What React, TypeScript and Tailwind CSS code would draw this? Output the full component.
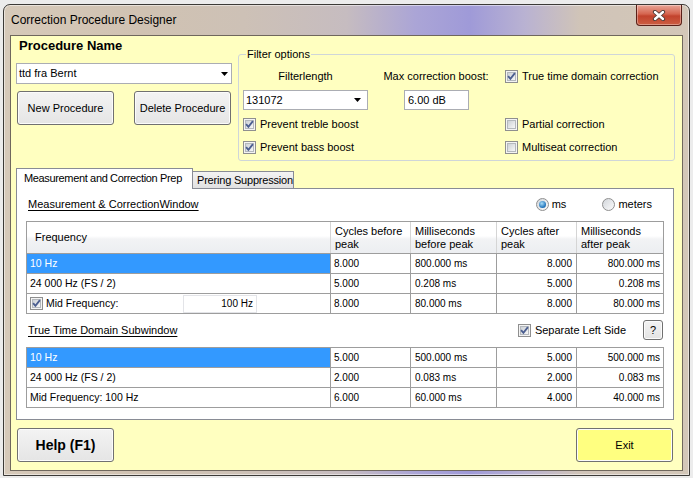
import React from 'react';

const Check = ({ checked }: { checked: boolean }) => (
  <span className="flex h-[13px] w-[13px] shrink-0 items-center justify-center border border-[#8f8f8f] bg-[#f4f4f4]">
    <span className="flex h-[9px] w-[9px] items-center justify-center border border-[#b4b8bd] bg-[linear-gradient(135deg,#cdd1d6,#f7f7f7)]">
      {checked && (
        <svg width="9" height="9" viewBox="0 0 9 9" className="overflow-visible">
          <path d="M1.1 4.2 L3.4 6.9 L7.9 1.1" fill="none" stroke="#4b5e90" strokeWidth="1.8" />
        </svg>
      )}
    </span>
  </span>
);

const Radio = ({ checked }: { checked: boolean }) => (
  <span className="flex h-[13px] w-[13px] shrink-0 items-center justify-center rounded-full border border-[#8f8f8f] bg-[linear-gradient(135deg,#d2d6db,#fbfbfb)]">
    {checked && (
      <span className="h-[7px] w-[7px] rounded-full bg-[radial-gradient(circle_at_40%_35%,#a9ddf8,#2477bd_65%,#0f4c88)]" />
    )}
  </span>
);

const Combo = ({ value, className }: { value: string; className: string }) => (
  <div className={`flex items-center border border-[#abadb3] bg-white ${className}`}>
    <span className="flex-1">{value}</span>
    <svg width="7" height="4" viewBox="0 0 7 4">
      <path d="M0 0h7L3.5 4z" fill="#000" />
    </svg>
  </div>
);

const Btn = ({ children, className }: { children: React.ReactNode; className: string }) => (
  <div
    className={`flex items-center justify-center rounded-[3px] border border-[#707070] shadow-[inset_0_0_0_1px_#fbfbfb] ${className}`}
  >
    {children}
  </div>
);

const cols = 'grid grid-cols-[303px_80px_86px_80px_87px]';

type Row = { first: React.ReactNode; selected?: boolean; vals: string[] };

const GridTable = ({ rows, header }: { rows: Row[]; header: boolean }) => (
  <div className="w-[638px] border border-[#9d9d9d] bg-white">
    {header && (
      <div className={`${cols} h-[32px] border-b border-[#9d9d9d] bg-[linear-gradient(#ffffff,#ffffff_45%,#f2f3f5_55%,#eceef1)]`}>
        <div className="flex items-center pl-[8px]">Frequency</div>
        {['Cycles before peak', 'Milliseconds before peak', 'Cycles after peak', 'Milliseconds after peak'].map((h) => (
          <div key={h} className="flex items-center border-l border-[#d5d5d5] pl-[4px] pr-[2px] leading-[13px]">
            {h}
          </div>
        ))}
      </div>
    )}
    {rows.map((r, i) => (
      <div key={i} className={`${cols} h-[19px] ${i > 0 ? 'box-content border-t border-[#9d9d9d]' : ''}`}>
        <div
          className={`flex items-center pl-[3px] text-[10.5px] ${r.selected ? 'bg-[#3399ff] text-white' : ''}`}
        >
          {r.first}
        </div>
        <div className="flex items-center border-l border-[#9d9d9d] pl-[3px] text-[10px]">{r.vals[0]}</div>
        <div className="flex items-center border-l border-[#9d9d9d] pl-[4px] text-[10px]">{r.vals[1]}</div>
        <div className="flex items-center justify-end border-l border-[#9d9d9d] pr-[4px] text-[10px]">{r.vals[2]}</div>
        <div className="flex items-center justify-end border-l border-[#9d9d9d] pr-[3px] text-[10px]">{r.vals[3]}</div>
      </div>
    ))}
  </div>
);

const midFreq = (
  <div className="flex h-full w-full items-center">
    <Check checked />
    <span className="ml-[3px] w-[137px]">Mid Frequency:</span>
    <div className="flex h-[18px] w-[74px] items-center justify-end border border-[#e3e4e8] bg-white pr-[3px] text-[10px]">
      100 Hz
    </div>
  </div>
);

const table1: Row[] = [
  { first: '10 Hz', selected: true, vals: ['8.000', '800.000 ms', '8.000', '800.000 ms'] },
  { first: '24 000 Hz (FS / 2)', vals: ['5.000', '0.208 ms', '5.000', '0.208 ms'] },
  { first: midFreq, vals: ['8.000', '80.000 ms', '8.000', '80.000 ms'] },
];

const table2: Row[] = [
  { first: '10 Hz', selected: true, vals: ['5.000', '500.000 ms', '5.000', '500.000 ms'] },
  { first: '24 000 Hz (FS / 2)', vals: ['2.000', '0.083 ms', '2.000', '0.083 ms'] },
  { first: 'Mid Frequency: 100 Hz', vals: ['6.000', '60.000 ms', '4.000', '40.000 ms'] },
];

export default function App() {
  return (
    <div className="h-[478px] w-[693px] overflow-hidden bg-[#ececec] pl-[3px] pt-[4px] font-['Liberation_Sans',Arial,sans-serif] text-[11px] leading-[13px] text-black">
      <div className="flex h-[472px] w-[687px] flex-col rounded-t-[7px] border border-[#3c3a37] bg-[linear-gradient(90deg,#d6c9b9_0%,#d0c2b2_20%,#cdc1b6_35%,#c6bcc0_50%,#aba5d6_60%,#9f9ad8_68%,#b9b2d2_76%,#d0c4b8_84%,#d3c7b8_100%)] shadow-[inset_0_0_0_1px_rgba(255,255,255,0.5)]">
        {/* title bar */}
        <div className="flex h-[30px] shrink-0 items-start justify-between">
          <span className="pl-[7px] pt-[8px] text-[12px] leading-[14px]">Correction Procedure Designer</span>
          <div className="mr-[7px] flex h-[21px] w-[46px] items-center justify-center rounded-b-[4px] border border-t-0 border-[#5a2018] bg-[linear-gradient(#e9a597,#d5654f_45%,#c2432d_55%,#cc5e42)] shadow-[inset_0_0_0_1px_rgba(255,255,255,0.35)]">
            <svg width="14" height="11" viewBox="0 0 14 11">
              <path d="M3 2 L11 9 M11 2 L3 9" stroke="#4a3a36" strokeWidth="4.2" strokeLinecap="round" />
              <path d="M3 2 L11 9 M11 2 L3 9" stroke="#ffffff" strokeWidth="2.4" strokeLinecap="round" />
            </svg>
          </div>
        </div>

        {/* client area */}
        <div className="mx-[6px] mb-[4px] flex flex-1 flex-col border border-[#6f675d] bg-[#ffffc0] pl-[5px] pr-[9px]">
          {/* top section */}
          <div className="flex items-start">
            <div className="flex w-[216px] shrink-0 flex-col pt-[2px]">
              <div className="pl-[3px] text-[13px] font-bold leading-[15px]">Procedure Name</div>
              <Combo value="ttd fra Bernt" className="mt-[10px] h-[21px] pl-[2px] pr-[3px]" />
              <div className="mt-[7px] flex justify-between">
                <Btn className="ml-[1px] h-[34px] w-[97px] bg-[linear-gradient(#f3f3f3,#e5e5e5)]">New Procedure</Btn>
                <Btn className="mr-[1px] h-[34px] w-[97px] bg-[linear-gradient(#f3f3f3,#e5e5e5)]">Delete Procedure</Btn>
              </div>
            </div>

            {/* Filter options group */}
            <div className="relative ml-[6px] mt-[18px] h-[107px] w-[437px] shrink-0 rounded-[3px] border border-[#cfd6d9] pl-[4px] pt-[14px]">
              <span className="absolute left-[7px] top-[-7px] bg-[#ffffc0] px-[1px] leading-[13px]">Filter options</span>
              <div className="flex h-[14px] items-center">
                <div className="w-[125px] text-center">Filterlength</div>
                <div className="ml-[15px] w-[106px] whitespace-nowrap text-center">Max correction boost:</div>
                <div className="ml-[16px] flex items-center gap-[4px]">
                  <Check checked />
                  <span className="whitespace-nowrap">True time domain correction</span>
                </div>
              </div>
              <div className="mt-[7px] flex h-[20px]">
                <Combo value="131072" className="h-[20px] w-[125px] pl-[2px] pr-[6px]" />
                <div className="ml-[36px] flex h-[20px] w-[65px] items-center border border-[#abadb3] bg-white pl-[3px]">
                  6.00 dB
                </div>
              </div>
              <div className="mt-[7px] flex h-[14px] items-center">
                <div className="flex w-[262px] items-center gap-[4px]">
                  <Check checked />
                  <span>Prevent treble boost</span>
                </div>
                <div className="flex items-center gap-[4px]">
                  <Check checked={false} />
                  <span>Partial correction</span>
                </div>
              </div>
              <div className="mt-[9px] flex h-[14px] items-center">
                <div className="flex w-[262px] items-center gap-[4px]">
                  <Check checked />
                  <span>Prevent bass boost</span>
                </div>
                <div className="flex items-center gap-[4px]">
                  <Check checked={false} />
                  <span>Multiseat correction</span>
                </div>
              </div>
            </div>
          </div>

          {/* tabs */}
          <div className="relative z-10 mt-[7px] -mb-px flex h-[21px] items-end">
            <div className="h-[21px] w-[177px] whitespace-nowrap border border-b-0 border-[#898c95] bg-white pl-[7px] pt-[3px] tracking-[-0.35px]">
              Measurement and Correction Prep
            </div>
            <div className="mb-[1px] flex h-[17px] w-[101px] items-center whitespace-nowrap border border-b-0 border-l-0 border-[#898c95] bg-[linear-gradient(#f3f3f3,#e1e1e1)] pl-[4px] tracking-[-0.2px]">
              Prering Suppression
            </div>
          </div>
          <div className="h-[232px] w-[658px] border border-[#898c95] bg-white pl-[9px] pt-[8px]">
            <div className="flex h-[15px] w-[638px] items-center justify-between">
              <span className="pl-[2px] underline underline-offset-2">Measurement &amp; CorrectionWindow</span>
              <div className="mr-[12px] flex items-center">
                <Radio checked />
                <span className="ml-[3px]">ms</span>
                <span className="ml-[36px]">
                  <Radio checked={false} />
                </span>
                <span className="ml-[3px]">meters</span>
              </div>
            </div>
            <div className="mt-[9px]">
              <GridTable rows={table1} header />
            </div>
            <div className="mt-[6px] flex h-[20px] w-[638px] items-center justify-between">
              <span className="pl-[2px] underline underline-offset-2">True Time Domain Subwindow</span>
              <div className="flex items-center">
                <Check checked />
                <span className="ml-[4px]">Separate Left Side</span>
                <Btn className="ml-[17px] mr-[1px] h-[20px] w-[20px] bg-[linear-gradient(#f3f3f3,#e3e3e3)]">?</Btn>
              </div>
            </div>
            <div className="mt-[7px]">
              <GridTable rows={table2} header={false} />
            </div>
          </div>

          {/* bottom buttons */}
          <div className="mt-[8px] flex justify-between">
            <Btn className="ml-[1px] h-[34px] w-[97px] bg-[linear-gradient(#f3f3f3,#e5e5e5)] text-[14px] font-bold">
              Help (F1)
            </Btn>
            <Btn className="h-[34px] w-[97px] bg-[#ffff80]">Exit</Btn>
          </div>
        </div>
      </div>
    </div>
  );
}
